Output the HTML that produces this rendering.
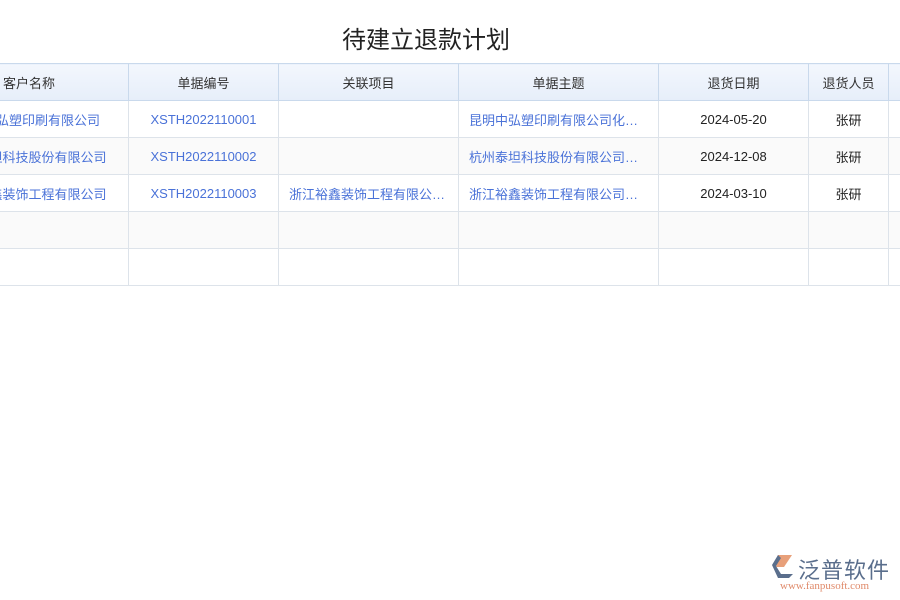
<!DOCTYPE html>
<html><head><meta charset="utf-8"><style>
body{margin:0;width:900px;height:600px;background:#fff;overflow:hidden;position:relative;font-family:"Liberation Sans","Noto Sans CJK SC",sans-serif;}
h1{position:absolute;top:20px;left:0;width:852px;text-align:center;margin:0;font-weight:normal;font-size:24px;color:#222;}
.wrap{position:absolute;left:0;top:0;width:900px;height:600px;overflow:hidden}
table{position:absolute;left:-72px;top:63px;width:1040px;border-collapse:collapse;table-layout:fixed;font-size:13px;}
td,th{border:1px solid #dde3ea;height:37px;padding:0 10px;text-align:center;white-space:nowrap;overflow:hidden;text-overflow:ellipsis;box-sizing:border-box}
td.t{text-align:left}
th{background:linear-gradient(#f3f7fd,#e6eefa);font-weight:normal;color:#333;border-color:#c9d9ec;}
tr:nth-child(odd) td{background:#fafafa}
.l{color:#4a72d8}.b{color:#222}
</style></head><body>
<h1>待建立退款计划</h1>
<div class="wrap">
<table>
<colgroup><col style="width:200px"><col style="width:150px"><col style="width:180px"><col style="width:200px"><col style="width:150px"><col style="width:80px"><col style="width:80px"></colgroup>
<tr><th style="text-align:left;padding-left:74px">客户名称</th><th>单据编号</th><th>关联项目</th><th>单据主题</th><th>退货日期</th><th>退货人员</th><th></th></tr>
<tr><td class="l">昆明中弘塑印刷有限公司</td><td class="l">XSTH2022110001</td><td></td><td class="l t">昆明中弘塑印刷有限公司化…</td><td class="b">2024-05-20</td><td class="b">张研</td><td></td></tr>
<tr><td class="l">杭州泰坦科技股份有限公司</td><td class="l">XSTH2022110002</td><td></td><td class="l t">杭州泰坦科技股份有限公司…</td><td class="b">2024-12-08</td><td class="b">张研</td><td></td></tr>
<tr><td class="l">浙江裕鑫装饰工程有限公司</td><td class="l">XSTH2022110003</td><td class="l t">浙江裕鑫装饰工程有限公…</td><td class="l t">浙江裕鑫装饰工程有限公司…</td><td class="b">2024-03-10</td><td class="b">张研</td><td></td></tr>
<tr><td></td><td></td><td></td><td></td><td></td><td></td><td></td></tr>
<tr><td></td><td></td><td></td><td></td><td></td><td></td><td></td></tr>
</table>
</div>
<svg style="position:absolute;left:770px;top:553px" width="28" height="26" viewBox="0 0 28 26"><path d="M8 2h14l-8 12H6z" fill="#e8a07a"/><path d="M2 12l6-10 3 3-5 8 5 8h12l-4 4H8z" fill="#5a6e8c"/></svg>
<div style="position:absolute;left:798px;top:553px;font-size:22px;color:#5a6e8c;letter-spacing:1px">泛普软件</div>
<div style="position:absolute;left:780px;top:580px;font-size:11px;color:#e08a6a;font-family:'Liberation Serif',serif">www.fanpusoft.com</div>
</body></html>
